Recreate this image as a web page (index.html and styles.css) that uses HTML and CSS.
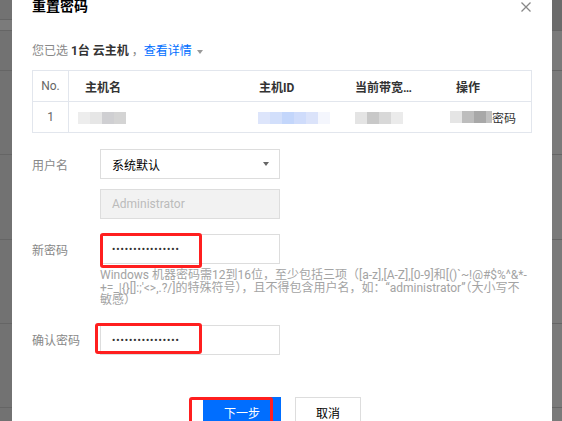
FILE: index.html
```html
<!DOCTYPE html>
<html lang="zh-CN">
<head>
    <meta charset="UTF-8">
    <meta name="viewport" content="width=device-width, initial-scale=1.0">
    <title>重置密码</title>
    <link rel="stylesheet" href="styles.css">
</head>
<body>
    <div class="screen">
        <div class="side side-left">
            <div class="cell cell-top"></div>
            <div class="cell cell-band"></div>
            <div class="cell cell-head"></div>
            <div class="cell cell-row"></div>
            <div class="cell cell-row cell-row-tall"></div>
            <div class="cell cell-row"></div>
            <div class="cell cell-row"></div>
        </div>

        <div class="dialog">
            <h2 class="dialog-title">重置密码</h2>
            <button class="dialog-close" aria-label="关闭">
                <svg width="10" height="10" viewBox="0 0 10 10">
                    <path d="M0.5 0.5 L9.5 9.5 M9.5 0.5 L0.5 9.5" stroke="#888" stroke-width="1.3" fill="none"/>
                </svg>
            </button>

            <p class="selected-info">
                您已选 <b class="selected-count">1台 云主机</b> ，<a class="detail-link">查看详情</a><span class="caret"></span>
            </p>

            <div class="host-table">
                <div class="table-row table-head">
                    <div class="col-no">No.</div>
                    <div>主机名</div>
                    <div>主机ID</div>
                    <div>当前带宽…</div>
                    <div>操作</div>
                </div>
                <div class="table-row">
                    <div class="col-no">1</div>
                    <div><span class="masked masked-name"></span></div>
                    <div><span class="masked masked-id"></span></div>
                    <div><span class="masked masked-bandwidth"></span></div>
                    <div class="col-action"><span class="masked masked-action"></span>密码</div>
                </div>
            </div>

            <div class="form">
                <div class="form-row row-user">
                    <label class="form-label">用户名</label>
                    <div class="field field-select">
                        <span>系统默认</span>
                        <span class="select-caret"></span>
                    </div>
                </div>
                <div class="form-row row-account">
                    <span class="form-label"></span>
                    <div class="field field-disabled">Administrator</div>
                </div>
                <div class="form-row row-password">
                    <label class="form-label">新密码</label>
                    <div class="field"><span class="pw-dots">••••••••••••••••</span></div>
                    <p class="field-hint">
                        Windows 机器密码需12到16位，至少包括三项（[a-z],[A-Z],[0-9]和[()`~!@#$%^&amp;*-<br>
                        +=_|{}[]:;'&lt;&gt;,.?/]的特殊符号），且不得包含用户名，如：“administrator”（大小写不<br>
                        敏感）
                    </p>
                </div>
                <div class="form-row row-confirm">
                    <label class="form-label">确认密码</label>
                    <div class="field"><span class="pw-dots">••••••••••••••••</span></div>
                </div>
            </div>

            <div class="dialog-footer">
                <button class="btn btn-primary">下一步</button>
                <button class="btn">取消</button>
            </div>

            <!-- red highlight frames -->
            <div class="mark mark-password"></div>
            <div class="mark mark-confirm"></div>
            <div class="mark mark-next"></div>
        </div>

        <div class="side side-right">
            <div class="cell cell-top"></div>
            <div class="cell cell-head"></div>
            <div class="cell cell-row"></div>
            <div class="cell cell-row cell-row-tall"></div>
            <div class="cell cell-row"></div>
            <div class="cell cell-row"></div>
        </div>
    </div>
</body>
</html>
```

FILE: styles.css
```css
* {
    box-sizing: border-box;
}

body {
    margin: 0;
    font-family: Roboto, "Noto Sans CJK SC", sans-serif;
    font-size: 12px;
    color: #333;
    background-color: #747474;
    overflow: hidden;
}

.screen {
    display: flex;
    width: 562px;
    height: 421px;
    overflow: hidden;
}

/* Grey page behind the dialog */
.side {
    display: flex;
    flex-direction: column;
    flex-shrink: 0;
}

.side-left {
    width: 12px;
    background-color: #727272;
}

.side-right {
    width: 10px;
    background-color: #7a7a7a;
}

.cell {
    flex-shrink: 0;
    border-bottom: 1px solid #656565;
}

.side-left .cell-top {
    height: 20px;
}

.cell-band {
    height: 11px;
    background-color: #7b7b7b;
}

.side-right .cell-top {
    height: 31px;
    background-color: #6b6b6b;
}

.cell-head {
    height: 40px;
}

.cell-row {
    height: 84px;
}

.cell-row-tall {
    height: 85px;
}

/* Dialog */
.dialog {
    position: relative;
    width: 540px;
    flex-shrink: 0;
    background-color: #fff;
    padding: 0 20px;
}

.dialog-title {
    margin: -4px 0 0;
    font-size: 14px;
    line-height: 20px;
    font-weight: bold;
    color: #000;
}

.dialog-close {
    position: absolute;
    top: 2px;
    right: 21px;
    width: 10px;
    height: 10px;
    padding: 0;
    border: none;
    background: none;
    display: flex;
}

.selected-info {
    margin: 26px 0 0;
    line-height: 18px;
    color: #888;
}

.selected-count {
    color: #333;
}

.detail-link {
    color: #006eff;
}

.caret {
    display: inline-block;
    margin-left: 5px;
    vertical-align: middle;
    border-left: 3.5px solid transparent;
    border-right: 3.5px solid transparent;
    border-top: 4px solid #999;
}

/* Host table */
.host-table {
    margin-top: 10px;
    border: 1px solid #e2e6ed;
}

.table-row {
    display: grid;
    grid-template-columns: 36px 173px 97px 101px 1fr;
    align-items: center;
    height: 30px;
}

.table-head {
    height: 31px;
    border-bottom: 1px solid #e2e6ed;
    font-weight: bold;
    color: #333;
}

.table-row > div {
    padding-left: 16px;
    white-space: nowrap;
    overflow: hidden;
}

.table-row > div:nth-child(3) {
    padding-left: 17px;
}

.table-row > .col-no {
    height: 100%;
    padding-left: 0;
    display: flex;
    align-items: center;
    justify-content: center;
    border-right: 1px solid #e2e6ed;
    font-weight: normal;
    color: #666;
}

.table-row > div:nth-child(3) .masked {
    margin-left: -1px;
}

.col-action {
    display: flex;
    align-items: center;
    color: #333;
}

.masked {
    display: inline-block;
    height: 12px;
    vertical-align: middle;
}

.masked-name {
    width: 48px;
    margin-left: -7px;
    background: linear-gradient(to right, #ededed 0 12px, #e6e6e6 12px 24px, #cfcfd2 24px 36px, #d4d4d4 36px 48px);
}

.masked-id {
    width: 72px;
    background: linear-gradient(to right, #dde5fb 0 12px, #d2dffb 12px 24px, #c3d6fb 24px 36px, #cfdcfb 36px 48px, #dbe3fa 48px 60px, #f4f6fd 60px 72px);
}

.masked-bandwidth {
    width: 48px;
    background: linear-gradient(to right, #e4e4e4 0 12px, #c8c8c8 12px 24px, #d8d8d8 24px 36px, #ebebeb 36px 48px);
}

.masked-action {
    width: 42px;
    margin-left: -6px;
    background: linear-gradient(to right, #e5e5e5 0 12px, #bdbdbd 12px 24px, #a8a8a8 24px 36px, #c0c0c0 36px 42px);
}

/* Form */
.form {
    margin-top: 16px;
}

.form-row {
    display: grid;
    grid-template-columns: 68px 1fr;
    align-items: center;
}

.row-user {
    margin-bottom: 10px;
}

.row-account {
    margin-bottom: 15px;
}

.row-confirm {
    margin-top: 18px;
}

.form-label {
    color: #888;
}

.field {
    display: flex;
    align-items: center;
    width: 180px;
    height: 30px;
    padding: 0 11px;
    border: 1px solid #ddd;
    color: #000;
}

.field-select {
    justify-content: space-between;
    padding-right: 10px;
}

.select-caret {
    border-left: 3.5px solid transparent;
    border-right: 3.5px solid transparent;
    border-top: 4px solid #666;
}

.field-disabled {
    background-color: #f2f2f2;
    color: #bbb;
}

.pw-dots {
    font-size: 9px;
    font-weight: bold;
    letter-spacing: 1px;
    color: #333;
}

.field-hint {
    grid-column: 2;
    margin: 5px 0 0;
    line-height: 12.6px;
    color: #a3a3a3;
    white-space: nowrap;
}

/* Footer buttons */
.dialog-footer {
    display: flex;
    justify-content: center;
    gap: 14px;
    margin-top: 42px;
}

.btn {
    width: 66px;
    height: 32px;
    border: 1px solid #ddd;
    background-color: #fff;
    color: #000;
    font-family: inherit;
    font-size: 12px;
    padding: 0;
}

.btn-primary {
    width: 78px;
    border: none;
    background-color: #006eff;
    color: #fff;
}

/* Red highlight frames */
.mark {
    position: absolute;
    border: 3px solid #ff1f1f;
    border-radius: 3px;
}

.mark-password {
    left: 88px;
    top: 233px;
    width: 102px;
    height: 35px;
}

.mark-confirm {
    left: 83px;
    top: 323px;
    width: 107px;
    height: 31px;
}

.mark-next {
    left: 177px;
    top: 397px;
    width: 84px;
    height: 40px;
}
```
